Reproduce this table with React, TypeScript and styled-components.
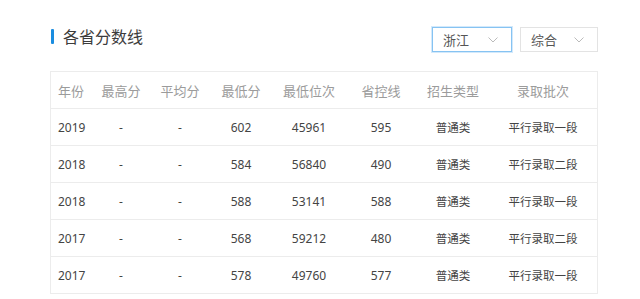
import React from "react";
import styled, { createGlobalStyle } from "styled-components";

const Global = createGlobalStyle`
  html, body { margin: 0; padding: 0; background: #fff; }
  body { font-family: "Noto Sans", "Noto Sans CJK SC", sans-serif; }
`;

const Page = styled.div`
  width: 640px;
  height: 299px;
  padding: 27px 0 0 50px;
  box-sizing: border-box;
  overflow: hidden;
`;

const TopBar = styled.div`
  width: 548px;
  height: 25px;
  display: flex;
  align-items: center;
  justify-content: space-between;
  margin-bottom: 19px;
`;

const Title = styled.h2`
  margin: 0;
  display: flex;
  align-items: center;
  gap: 9px;
  font-size: 16px;
  font-weight: 400;
  color: #3c3c3c;
  line-height: 20px;
  position: relative;
  top: -3px;
  &::before {
    content: "";
    display: block;
    width: 3px;
    height: 15px;
    margin-left: 1px;
    background: #1a8de0;
    border-radius: 1px;
  }
`;

const Selects = styled.div`
  display: flex;
  gap: 8px;
`;

const Select = styled.div<{ $active?: boolean }>`
  box-sizing: border-box;
  width: ${(p) => (p.$active ? 80 : 78)}px;
  height: 25px;
  display: flex;
  align-items: center;
  justify-content: space-between;
  padding: 0 13px 0 10px;
  font-size: 13px;
  color: #555;
  background: #fff;
  border: 1px solid ${(p) => (p.$active ? "#86c3f2" : "#e3e3e3")};
  box-shadow: ${(p) => (p.$active ? "0 0 0 1px #d3e9fb" : "none")};
`;

const Chevron = () => (
  <svg width="10" height="6" viewBox="0 0 10 6" fill="none">
    <path d="M0.5 0.5 L5 5 L9.5 0.5" stroke="#bbb" strokeWidth="1" />
  </svg>
);

const Table = styled.div`
  width: 548px;
  box-sizing: border-box;
  border: 1px solid #ececec;
`;

const Row = styled.div<{ $head?: boolean }>`
  display: grid;
  grid-template-columns: 40px 60px 58px 64px 72px 72px 72px 108px;
  height: ${(p) => (p.$head ? 36 : 37)}px;
  align-items: center;
  border-top: ${(p) => (p.$head ? "none" : "1px solid #ececec")};
  box-sizing: border-box;
  color: ${(p) => (p.$head ? "#9b9b9b" : "#444")};
  font-size: ${(p) => (p.$head ? 13 : 12)}px;
`;

const Cell = styled.div<{ $left?: boolean; $cjk?: boolean }>`
  text-align: ${(p) => (p.$left ? "left" : "center")};
  padding-left: ${(p) => (p.$left ? 7 : 0)}px;
  white-space: nowrap;
  font-size: ${(p) => (p.$cjk ? "11.5px" : "inherit")};
`;

const heads = ["年份", "最高分", "平均分", "最低分", "最低位次", "省控线", "招生类型", "录取批次"];
const rows = [
  ["2019", "-", "-", "602", "45961", "595", "普通类", "平行录取一段"],
  ["2018", "-", "-", "584", "56840", "490", "普通类", "平行录取二段"],
  ["2018", "-", "-", "588", "53141", "588", "普通类", "平行录取一段"],
  ["2017", "-", "-", "568", "59212", "480", "普通类", "平行录取二段"],
  ["2017", "-", "-", "578", "49760", "577", "普通类", "平行录取一段"],
];

export default function App() {
  return (
    <>
      <Global />
      <Page>
        <TopBar>
          <Title>各省分数线</Title>
          <Selects>
            <Select $active>
              <span>浙江</span>
              <Chevron />
            </Select>
            <Select>
              <span>综合</span>
              <Chevron />
            </Select>
          </Selects>
        </TopBar>
        <Table>
          <Row $head>
            {heads.map((h, i) => (
              <Cell key={h} $left={i === 0}>{h}</Cell>
            ))}
          </Row>
          {rows.map((r, ri) => (
            <Row key={ri}>
              {r.map((c, i) => (
                <Cell key={i} $left={i === 0} $cjk={i >= 6}>{c}</Cell>
              ))}
            </Row>
          ))}
        </Table>
      </Page>
    </>
  );
}
